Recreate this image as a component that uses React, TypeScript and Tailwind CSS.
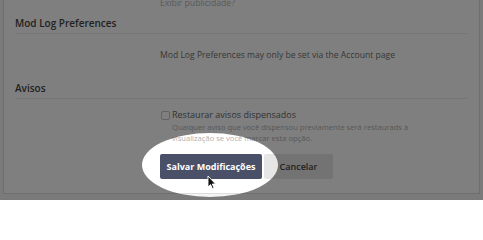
import React from "react";

function Cursor() {
  return (
    <svg
      className="absolute left-[207px] top-[175px] z-20"
      width="10"
      height="15"
      viewBox="0 0 10 15"
    >
      <path
        d="M1 1 L1 12 L3.6 9.6 L5.4 13.6 L7 12.9 L5.3 9 L8.6 9 Z"
        fill="#111"
        stroke="#fff"
        strokeWidth="0.9"
        strokeLinejoin="round"
      />
    </svg>
  );
}

export default function App() {
  return (
    <div className="relative h-[200px] w-[483px] overflow-hidden bg-[#f4f4f4] font-['Open_Sans',sans-serif]">
      <div className="mx-[3px] -mt-[4px] border-x border-b border-[#dcdcdc] bg-white pb-[14px]">
        <p className="pl-[156px] text-[8.6px] leading-[14px] text-[#b3b3b3]">
          Exibir publicidade?
        </p>

        <div className="mx-[11px] mt-[5px] border-b border-[#ececec] pb-[2px]">
          <h2 className="text-[10px] font-semibold leading-[16px] text-[#454545]">
            Mod Log Preferences
          </h2>
        </div>
        <p className="mt-[14px] pl-[156px] text-[8.6px] leading-[14px] text-[#707070]">
          Mod Log Preferences may only be set via the Account page
        </p>

        <div className="mx-[11px] mt-[18px] border-b border-[#ececec] pb-[2px]">
          <h2 className="text-[10px] font-semibold leading-[16px] text-[#454545]">
            Avisos
          </h2>
        </div>

        <div className="mt-[9px] pl-[157px]">
          <label className="flex items-center gap-[2px] text-[9px] leading-[14px] text-[#666]">
            <span className="h-[9px] w-[9px] shrink-0 rounded-[2px] border border-[#c4c4c4] bg-white" />
            <span>Restaurar avisos dispensados</span>
          </label>
          <p className="pl-[11px] text-[7.6px] leading-[11px] text-[#b0b0b0]">
            Qualquer aviso que você dispensou previamente será restaurads à
            <br />
            visualização se você marcar esta opção.
          </p>
        </div>

        <div className="mt-[10px] flex gap-[2px] pl-[156px]">
          <button className="h-[25px] w-[102px] whitespace-nowrap rounded-[2px] bg-[#4a5068] text-[9px] font-bold text-white">
            Salvar Modificações
          </button>
          <button className="h-[25px] w-[69px] rounded-[2px] bg-[#e6e6e6] text-[9px] font-semibold text-[#444]">
            Cancelar
          </button>
        </div>
      </div>

      <div className="pointer-events-none absolute left-[142px] top-[133px] z-10 h-[64px] w-[136px] rounded-[50%] shadow-[0_0_3px_1000px_rgba(0,0,0,0.5)]" />
      <Cursor />
    </div>
  );
}
